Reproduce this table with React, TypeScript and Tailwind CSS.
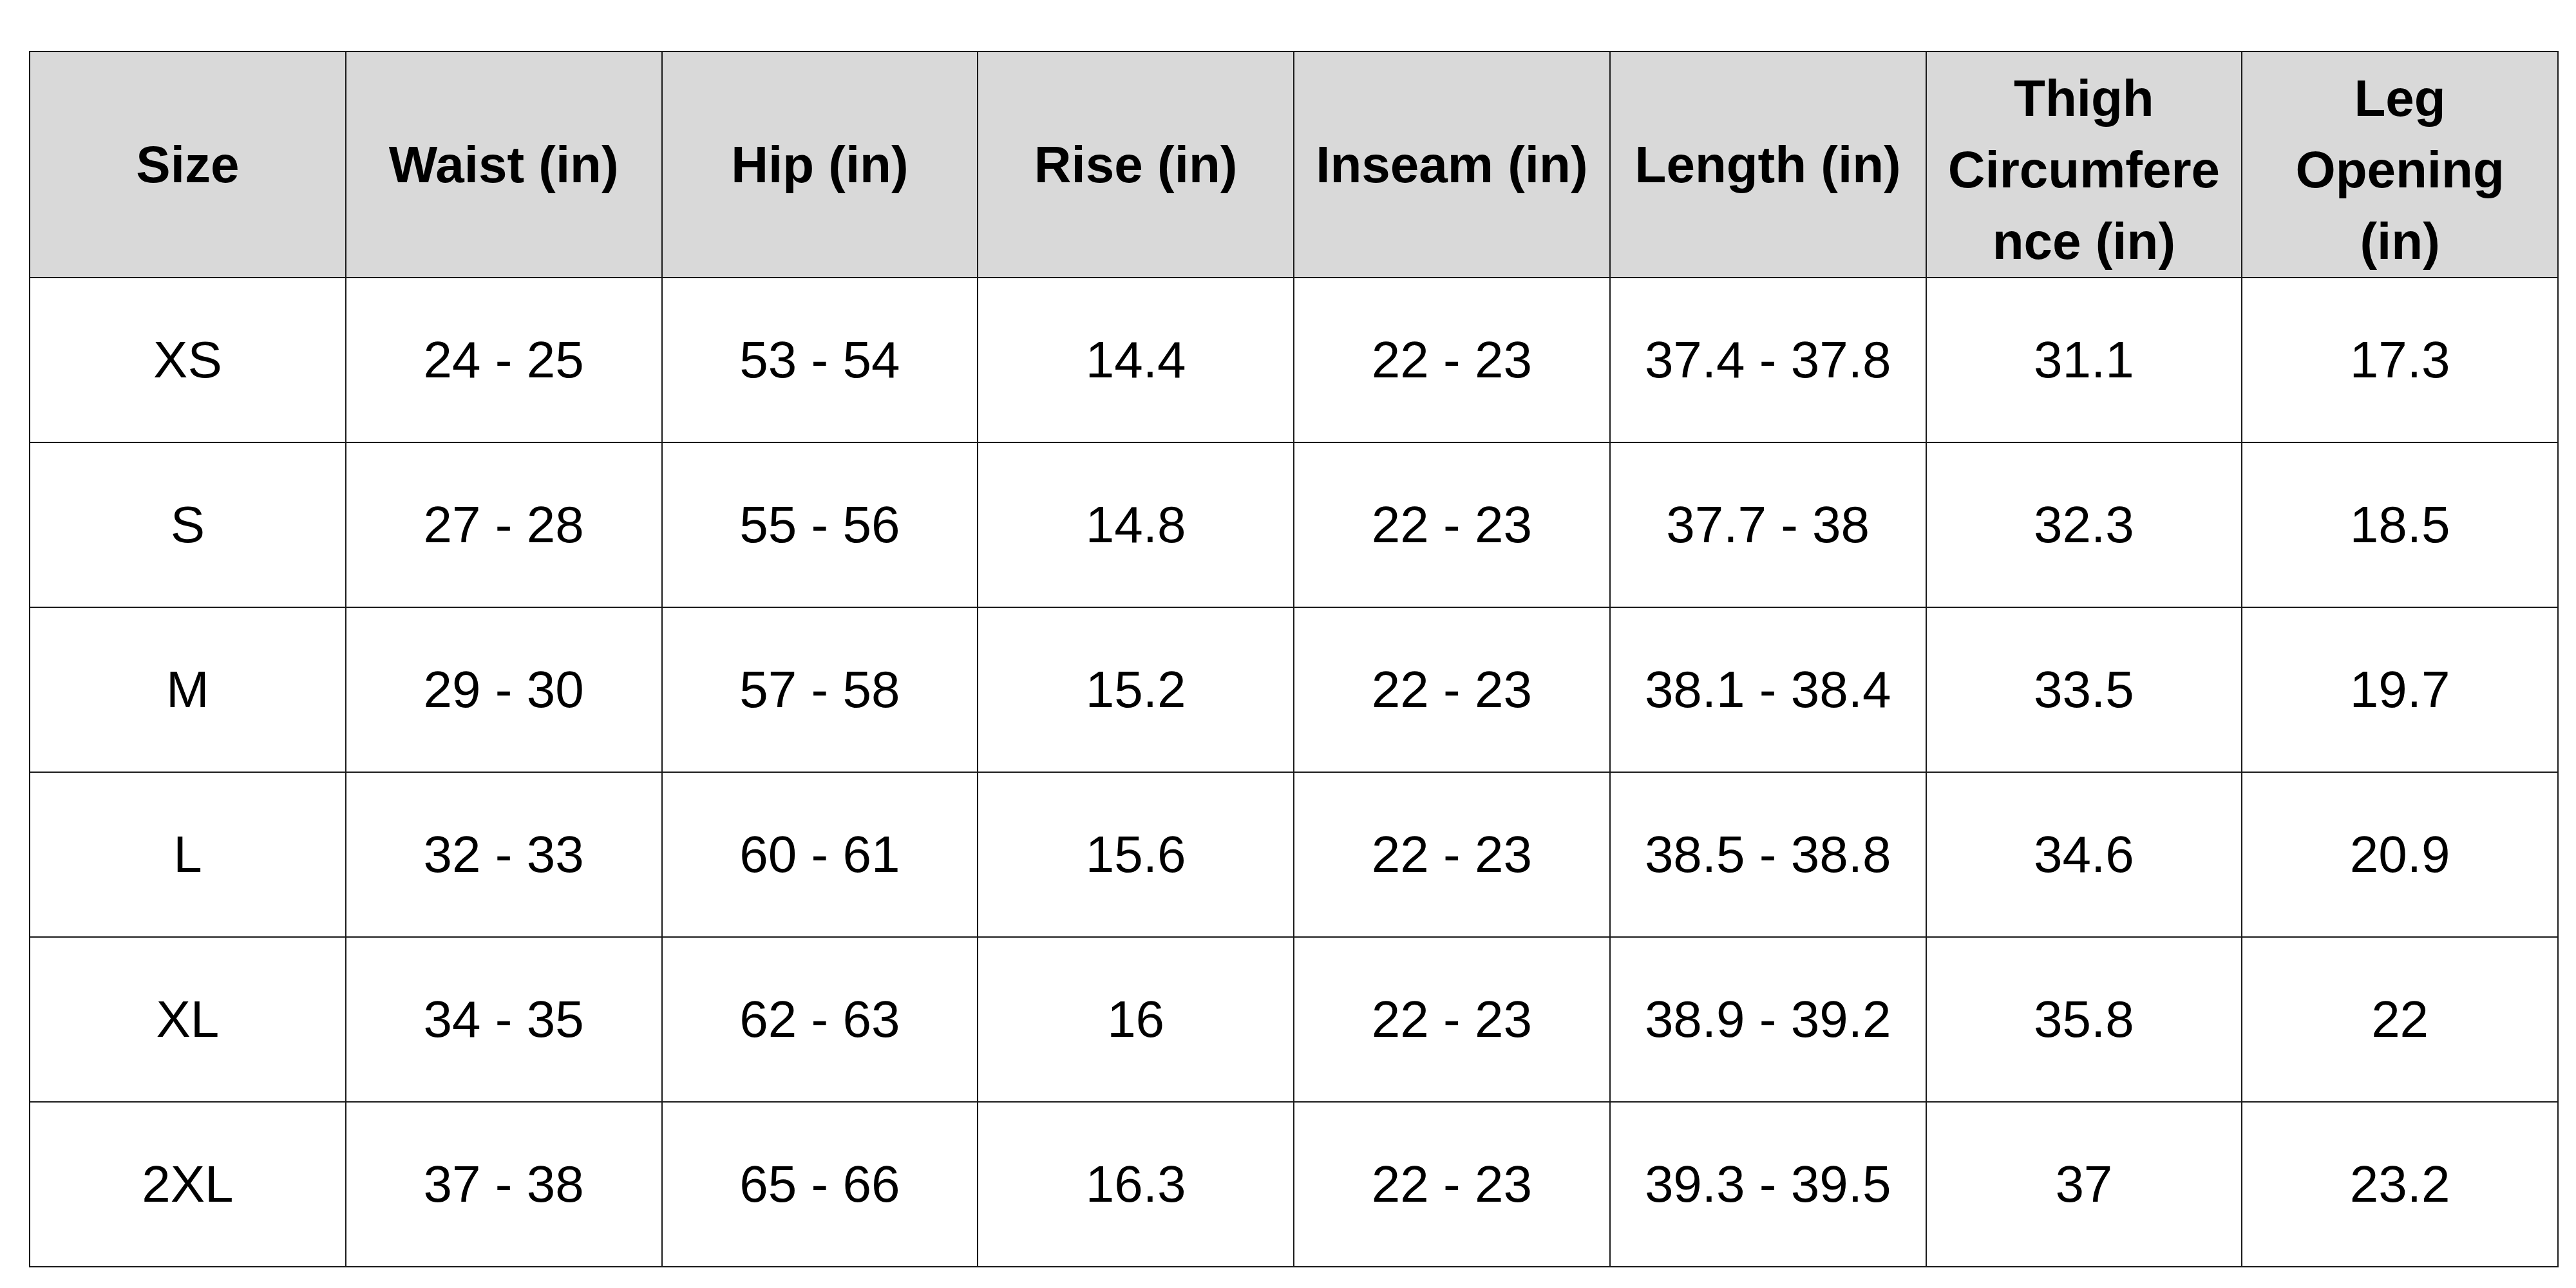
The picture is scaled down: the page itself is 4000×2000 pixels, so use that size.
const headers = [
  { label: "Size", wraps: false },
  { label: "Waist (in)", wraps: false },
  { label: "Hip (in)", wraps: false },
  { label: "Rise (in)", wraps: false },
  { label: "Inseam (in)", wraps: false },
  { label: "Length (in)", wraps: false },
  { label: "Thigh Circumference (in)", wraps: true },
  { label: "Leg Opening (in)", wraps: true },
];

const rows = [
  ["XS", "24 - 25", "53 - 54", "14.4", "22 - 23", "37.4 - 37.8", "31.1", "17.3"],
  ["S", "27 - 28", "55 - 56", "14.8", "22 - 23", "37.7 - 38", "32.3", "18.5"],
  ["M", "29 - 30", "57 - 58", "15.2", "22 - 23", "38.1 - 38.4", "33.5", "19.7"],
  ["L", "32 - 33", "60 - 61", "15.6", "22 - 23", "38.5 - 38.8", "34.6", "20.9"],
  ["XL", "34 - 35", "62 - 63", "16", "22 - 23", "38.9 - 39.2", "35.8", "22"],
  ["2XL", "37 - 38", "65 - 66", "16.3", "22 - 23", "39.3 - 39.5", "37", "23.2"],
];

export default function App() {
  return (
    <div className="min-h-[2000px] w-[4000px] bg-white pl-[45px] pt-[79px] font-['Liberation_Sans',Arial,sans-serif] text-black">
      <table className="w-[3928px] table-fixed border-collapse border-2 border-[#1a1a1a]">
        <thead>
          <tr className="h-[351px] bg-[#d9d9d9]">
            {headers.map((h) => (
              <th
                key={h.label}
                className={
                  h.wraps
                    ? "border-2 border-[#1a1a1a] px-3 pt-[16px] pb-0 text-center align-middle text-[80px] font-bold leading-[111px] [overflow-wrap:anywhere]"
                    : "border-2 border-[#1a1a1a] px-3 text-center align-middle text-[80px] font-bold leading-[112px]"
                }
              >
                {h.label}
              </th>
            ))}
          </tr>
        </thead>
        <tbody>
          {rows.map((r) => (
            <tr key={r[0]} className="h-[256px]">
              {r.map((c, i) => (
                <td
                  key={i}
                  className="border-2 border-[#1a1a1a] px-3 text-center align-middle text-[80px] leading-[92px]"
                >
                  {c}
                </td>
              ))}
            </tr>
          ))}
        </tbody>
      </table>
    </div>
  );
}
